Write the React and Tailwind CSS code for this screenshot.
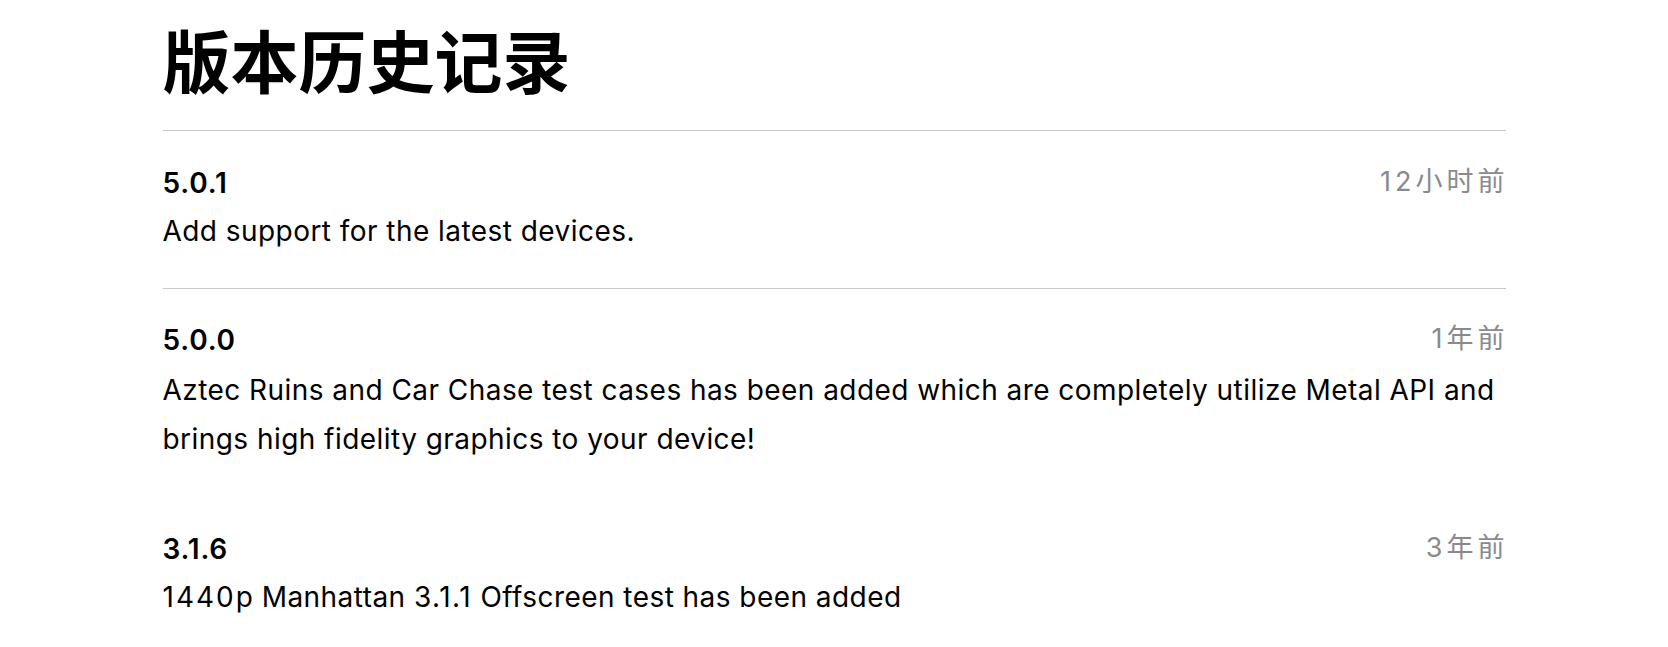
export default function App() {
  const font = { fontFamily: 'Inter, "Noto Sans CJK SC", sans-serif' };
  const Head = ({ v, t }) => (
    <div className="flex items-center justify-between h-[49px]">
      <span className="text-[28px] font-semibold tracking-[0.8px]">{v}</span>
      <span className="-mr-[3px] text-[27px] tracking-[4px] text-[#8a8a8e]">{t}</span>
    </div>
  );
  return (
    <div className="min-h-[647px] bg-white text-black" style={font}>
      <div className="mx-auto w-[1343px]">
        <h1 className="pt-[22px] pb-[26px] text-[68px] leading-[82px] font-semibold">版本历史记录</h1>
        <div className="border-t border-[#c8c8c8]">
          <div className="pt-[27px] pb-[32px] border-b border-[#c8c8c8]">
            <Head v="5.0.1" t="12小时前" />
            <p className="text-[28px] leading-[49px] tracking-[0.45px]">Add support for the latest devices.</p>
          </div>
          <div className="pt-[26px] pb-[60px]">
            <Head v="5.0.0" t="1年前" />
            <p className="mt-[2px] text-[28px] leading-[49px] tracking-[0.45px]">
              Aztec Ruins and Car Chase test cases has been added which are completely utilize Metal API and brings high fidelity graphics to your device!
            </p>
          </div>
          <div>
            <Head v="3.1.6" t="3年前" />
            <p className="text-[28px] leading-[49px] tracking-[0.45px]">
              <span className="tracking-[2px]">1440</span>p Manhattan <span className="tracking-[1.5px]">3.1.1</span> Offscreen test has been added
            </p>
          </div>
        </div>
      </div>
    </div>
  );
}
